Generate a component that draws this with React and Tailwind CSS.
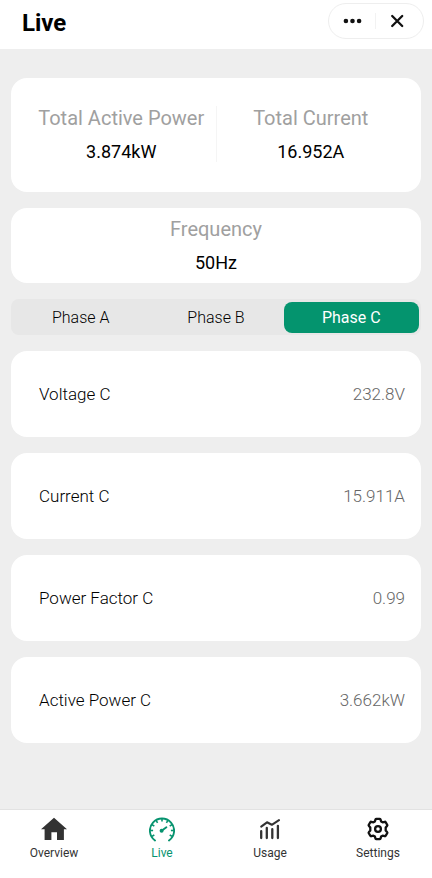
import { useState } from "react";

const phases = {
  A: { Voltage: "231.4V", Current: "0.512A", "Power Factor": "0.98", "Active Power": "0.106kW" },
  B: { Voltage: "232.1V", Current: "0.529A", "Power Factor": "0.97", "Active Power": "0.106kW" },
  C: { Voltage: "232.8V", Current: "15.911A", "Power Factor": "0.99", "Active Power": "3.662kW" },
};

function HomeIcon() {
  return (
    <svg viewBox="0 0 26 26" className="size-[26px]" fill="#333333" aria-hidden="true">
      <path d="M13 1.8 26 13.2H22.9V24H16V16.2H10.4V24H3.6V13.2H0Z" />
    </svg>
  );
}

function GaugeIcon() {
  const ticks = [-90, -60, -30, 0, 30, 60, 90, -120, 120];
  return (
    <svg viewBox="0 0 26 26" className="size-[26px]" fill="none" stroke="#07936f" aria-hidden="true">
      <path d="M6 24.5A12.1 12.1 0 1 1 20 24.5" strokeWidth="1.9" strokeLinecap="round" />
      {ticks.map((angle) => (
        <path key={angle} d="M13 2.8V5.6" strokeWidth="1.6" transform={`rotate(${angle} 13 14.5)`} />
      ))}
      <circle cx="12.6" cy="14.8" r="2" fill="#07936f" stroke="none" />
      <path d="M12.6 14.8 17.4 11.2" strokeWidth="1.9" strokeLinecap="round" />
    </svg>
  );
}

function UsageIcon() {
  return (
    <svg viewBox="0 0 26 26" className="size-[26px]" fill="none" stroke="#333333" strokeLinecap="round" strokeLinejoin="round" aria-hidden="true">
      <path d="M4.2 15.2V22M9.8 12V22M15.3 13.2V22M20.9 9.8V22" strokeWidth="2.3" />
      <path d="M4.2 10.6 10 6.3 14.8 8.8 22 4.2" strokeWidth="2.1" />
    </svg>
  );
}

function SettingsIcon() {
  return (
    <svg viewBox="0 0 26 26" className="size-[26px]" fill="none" stroke="#111111" strokeWidth="2.3" strokeLinejoin="round" aria-hidden="true">
      <path d="M10.6 3.2Q10.8 2.8 11.3 2.8H14.7Q15.2 2.8 15.4 3.2L16.1 5.4L17.6 6.3L19.8 5.8Q20.3 5.7 20.6 6.1L22.3 9Q22.5 9.5 22.2 9.8L20.7 11.6V14.4L22.2 16.2Q22.5 16.5 22.3 17L20.6 19.9Q20.3 20.3 19.8 20.2L17.6 19.7L16.1 20.6L15.4 22.8Q15.2 23.2 14.7 23.2H11.3Q10.8 23.2 10.6 22.8L9.9 20.6L8.4 19.7L6.2 20.2Q5.7 20.3 5.4 19.9L3.7 17Q3.5 16.5 3.8 16.2L5.3 14.4V11.6L3.8 9.8Q3.5 9.5 3.7 9L5.4 6.1Q5.7 5.7 6.2 5.8L8.4 6.3L9.9 5.4Z" />
      <circle cx="13" cy="13" r="2.9" />
    </svg>
  );
}

function Stat({ label, value }) {
  return (
    <div className="flex flex-1 flex-col items-center">
      <dt className="text-xl leading-7 text-[#a0a0a0]">{label}</dt>
      <dd className="mt-2 text-lg leading-6 text-black">{value}</dd>
    </div>
  );
}

const navItems = [
  { name: "Overview", Icon: HomeIcon },
  { name: "Live", Icon: GaugeIcon },
  { name: "Usage", Icon: UsageIcon },
  { name: "Settings", Icon: SettingsIcon },
];

export default function App() {
  const [phase, setPhase] = useState("C");

  return (
    <div className="flex min-h-dvh flex-col bg-[#eeeeee] font-['Roboto',sans-serif]">
      <header className="flex h-[49px] items-center justify-between bg-white pr-2 pb-[7px] pl-[22px]">
        <h1 className="pt-[3px] text-2xl leading-8 font-bold text-black">Live</h1>
        <div className="flex h-9 w-24 items-center rounded-full border border-[#eeeeee] bg-white pr-[3px] pl-px">
          <button type="button" aria-label="More" className="flex h-full flex-1 items-center justify-center">
            <svg viewBox="0 0 20 20" className="size-5" fill="#111111" aria-hidden="true">
              <circle cx="3.9" cy="10" r="2.3" />
              <circle cx="10.5" cy="10" r="2.3" />
              <circle cx="17.1" cy="10" r="2.3" />
            </svg>
          </button>
          <span className="h-4 w-px bg-[#f2f2f2]" />
          <button type="button" aria-label="Close" className="flex h-full flex-1 items-center justify-center">
            <svg viewBox="0 0 20 20" className="size-5" fill="none" stroke="#111111" strokeWidth="2.3" strokeLinecap="round" aria-hidden="true">
              <path d="M4.2 5 14.2 15M14.2 5 4.2 15" />
            </svg>
          </button>
        </div>
      </header>

      <main className="flex flex-col gap-4 px-[11px] pt-[29px] pb-6">
        <dl className="flex h-[114px] items-center rounded-2xl bg-white px-4 pb-[2px]">
          <Stat label="Total Active Power" value="3.874kW" />
          <div className="h-14 w-px bg-[#f5f5f5]" />
          <Stat label="Total Current" value="16.952A" />
        </dl>

        <dl className="flex h-[75px] items-center rounded-2xl bg-white px-4 pb-[2px]">
          <Stat label="Frequency" value="50Hz" />
        </dl>

        <div role="tablist" aria-label="Phase" className="flex h-9 rounded-lg bg-[#e7e7e7] px-[2px] pt-[3px] pb-[2px]">
          {Object.keys(phases).map((name) => (
            <button
              key={name}
              type="button"
              role="tab"
              aria-selected={name === phase}
              onClick={() => setPhase(name)}
              className={
                name === phase
                  ? "flex-1 rounded-lg bg-[#04946e] text-base text-white"
                  : "flex-1 rounded-lg text-base font-light text-black"
              }
            >
              Phase {name}
            </button>
          ))}
        </div>

        <dl className="flex flex-col gap-4">
          {Object.entries(phases[phase]).map(([label, value]) => (
            <div key={label} className="flex h-[86px] items-center justify-between rounded-2xl bg-white pr-4 pl-7 text-[17px] leading-6 font-light">
              <dt className="text-black">{label} {phase}</dt>
              <dd className="text-[#666666]">{value}</dd>
            </div>
          ))}
        </dl>
      </main>

      <nav className="mt-auto flex h-[69px] border-t border-[#e2e2e2] bg-white pt-[6px]">
        {navItems.map(({ name, Icon }) => (
          <a
            key={name}
            href={`#${name.toLowerCase()}`}
            aria-current={name === "Live" ? "page" : undefined}
            className={
              name === "Live"
                ? "flex flex-1 flex-col items-center gap-[3px] text-xs text-[#07936f]"
                : "flex flex-1 flex-col items-center gap-[3px] text-xs text-[#333333]"
            }
          >
            <Icon />
            {name}
          </a>
        ))}
      </nav>
    </div>
  );
}
